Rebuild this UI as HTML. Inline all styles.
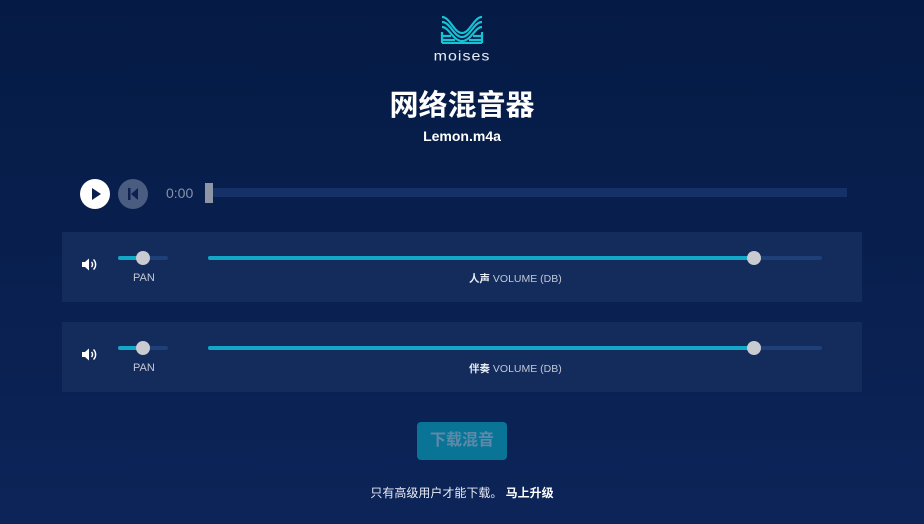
<!DOCTYPE html>
<html><head><meta charset="utf-8"><style>
*{margin:0;padding:0;box-sizing:border-box}
body{width:924px;height:524px;overflow:hidden;background:linear-gradient(180deg,#051b45 0%,#0c2458 100%);font-family:"Liberation Sans","Noto Sans CJK SC",sans-serif;color:#fff;position:relative}
.abs{position:absolute}
.panel{position:absolute;left:62px;width:800px;height:70px;background:#142c5c}
.track{position:absolute;height:4px;border-radius:2px;background:#1e3f78}
.fill{position:absolute;height:4px;border-radius:2px;background:#12a9c8}
.knob{position:absolute;width:14px;height:14px;border-radius:50%;background:#c9cbd0}
.lbl{position:absolute;font-size:11px;color:#c2c8d6}
</style></head><body>
<svg class="abs" style="left:440px;top:15px" width="44" height="29" viewBox="0 0 44 29" fill="none" stroke="#16c2d4" stroke-width="2.2">
<path d="M2 2 C10 2 14 18 22 18 C30 18 34 2 42 2"/>
<path d="M2 7 C10 7 14 22 22 22 C30 22 34 7 42 7"/>
<path d="M2 12 C9 12 13 26 22 26 C31 26 35 12 42 12"/>
<path d="M2 17 L2 28 M42 17 L42 28 M2 21 L11 21 M33 21 L42 21 M2 25 L15 25 M29 25 L42 25 M2 28 L42 28"/>
</svg>
<div class="abs" style="left:0;width:924px;top:48px;text-align:center;font-size:16px;letter-spacing:1px;color:#e8ecf4;transform:scaleY(0.85)">moises</div>
<div class="abs" style="left:0;width:924px;top:82px;text-align:center;font-size:29px;font-weight:bold">网络混音器</div>
<div class="abs" style="left:0;width:924px;top:128px;text-align:center;font-size:14px;font-weight:bold">Lemon.m4a</div>
<div class="abs" style="left:80px;top:179px;width:30px;height:30px;border-radius:50%;background:#fff"></div>
<svg class="abs" style="left:80px;top:179px" width="30" height="30"><path d="M12 9 L21 15 L12 21Z" fill="#0a1f4c"/></svg>
<div class="abs" style="left:118px;top:179px;width:30px;height:30px;border-radius:50%;background:#4a5c80"></div>
<svg class="abs" style="left:118px;top:179px" width="30" height="30"><rect x="10" y="9" width="2.5" height="12" fill="#0d2150"/><path d="M20 9 L13 15 L20 21Z" fill="#0d2150"/></svg>
<div class="abs" style="left:166px;top:185px;font-size:14px;color:#8793ab">0:00</div>
<div class="abs" style="left:205px;top:188px;width:642px;height:9px;background:#163167"></div>
<div class="abs" style="left:205px;top:183px;width:8px;height:20px;background:#8d95a6"></div>

<div class="panel" style="top:232px"></div>
<div class="panel" style="top:322px"></div>

<svg class="abs" style="left:81px;top:257px" width="18" height="15"><path d="M1 5h3l4-3.5v12l-4-3.5H1z" fill="#fff"/><path d="M10.5 5a3.5 3.5 0 0 1 0 5M12.5 2.5a7 7 0 0 1 0 10" stroke="#fff" stroke-width="1.5" fill="none"/></svg>
<div class="track" style="left:118px;top:256px;width:50px"></div><div class="fill" style="left:118px;top:256px;width:25px"></div><div class="knob" style="left:136px;top:251px"></div>
<div class="lbl" style="left:133px;top:272px">PAN</div>
<div class="track" style="left:208px;top:256px;width:614px"></div><div class="fill" style="left:208px;top:256px;width:546px"></div><div class="knob" style="left:747px;top:251px"></div>
<div class="lbl" style="left:469px;top:271px;font-size:10.5px"><b style="color:#e8ecf4">人声</b> VOLUME (DB)</div>

<svg class="abs" style="left:81px;top:347px" width="18" height="15"><path d="M1 5h3l4-3.5v12l-4-3.5H1z" fill="#fff"/><path d="M10.5 5a3.5 3.5 0 0 1 0 5M12.5 2.5a7 7 0 0 1 0 10" stroke="#fff" stroke-width="1.5" fill="none"/></svg>
<div class="track" style="left:118px;top:346px;width:50px"></div><div class="fill" style="left:118px;top:346px;width:25px"></div><div class="knob" style="left:136px;top:341px"></div>
<div class="lbl" style="left:133px;top:362px">PAN</div>
<div class="track" style="left:208px;top:346px;width:614px"></div><div class="fill" style="left:208px;top:346px;width:546px"></div><div class="knob" style="left:747px;top:341px"></div>
<div class="lbl" style="left:469px;top:361px;font-size:10.5px"><b style="color:#e8ecf4">伴奏</b> VOLUME (DB)</div>

<div class="abs" style="left:417px;top:422px;width:90px;height:38px;border-radius:4px;background:#0a7496;color:#5d8aa9;font-size:16px;font-weight:bold;text-align:center;line-height:38px">下载混音</div>
<div class="abs" style="left:0;width:924px;top:484px;text-align:center;font-size:12px;color:#e8ecf4">只有高级用户才能下载。 <b style="color:#fff">马上升级</b></div>
</body></html>
